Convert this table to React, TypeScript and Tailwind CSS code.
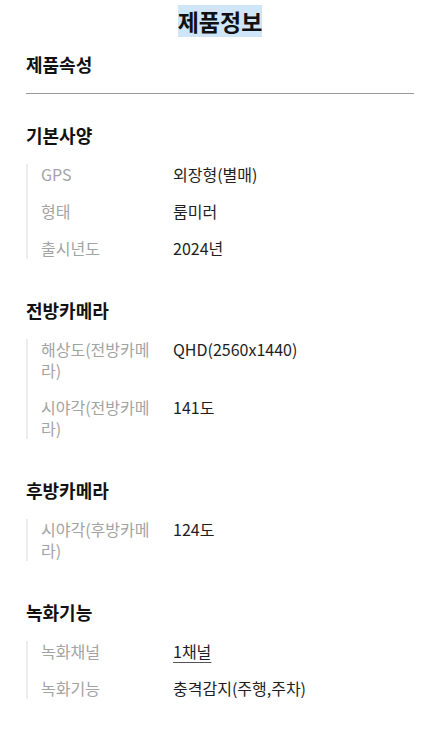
const sections = [
  {
    title: '기본사양',
    rows: [
      { label: 'GPS', value: '외장형(별매)' },
      { label: '형태', value: '룸미러' },
      { label: '출시년도', value: '2024년' },
    ],
  },
  {
    title: '전방카메라',
    rows: [
      { label: '해상도(전방카메라)', value: 'QHD(2560x1440)' },
      { label: '시야각(전방카메라)', value: '141도' },
    ],
  },
  {
    title: '후방카메라',
    rows: [{ label: '시야각(후방카메라)', value: '124도' }],
  },
  {
    title: '녹화기능',
    rows: [
      { label: '녹화채널', value: '1채널', link: true },
      { label: '녹화기능', value: '충격감지(주행,주차)' },
    ],
  },
]

export default function App() {
  return (
    <div className="min-h-[742px] bg-white px-[26px] pt-[5px] font-['Noto_Sans_CJK_KR',sans-serif] text-[#1e1e1e]">
      <div className="flex justify-center">
        <h1 className="bg-[#cfe5f8] text-[23px] font-bold leading-[32px] text-[#111]">제품정보</h1>
      </div>

      <h2 className="mt-[14px] text-[18px] font-bold leading-[26px] text-[#111]">제품속성</h2>
      <div className="mt-[16px] border-t border-[#9a9a9a]" />

      <div className="mt-[28px] flex flex-col gap-[38px]">
        {sections.map((s) => (
          <section key={s.title}>
            <h3 className="mb-[16px] text-[18px] font-bold leading-[26px] text-[#111]">{s.title}</h3>
            <div className="flex flex-col gap-[16px] border-l-2 border-[#ececec] pl-[13px]">
              {s.rows.map((r) => (
                <div key={r.label} className="grid grid-cols-[120px_1fr] gap-x-[12px] text-[16px] leading-[21px]">
                  <div className="text-[#a3a3a3]">{r.label}</div>
                  <div>
                    {r.link ? (
                      <span className="underline decoration-[#555] underline-offset-[4px]">{r.value}</span>
                    ) : (
                      r.value
                    )}
                  </div>
                </div>
              ))}
            </div>
          </section>
        ))}
      </div>
    </div>
  )
}
